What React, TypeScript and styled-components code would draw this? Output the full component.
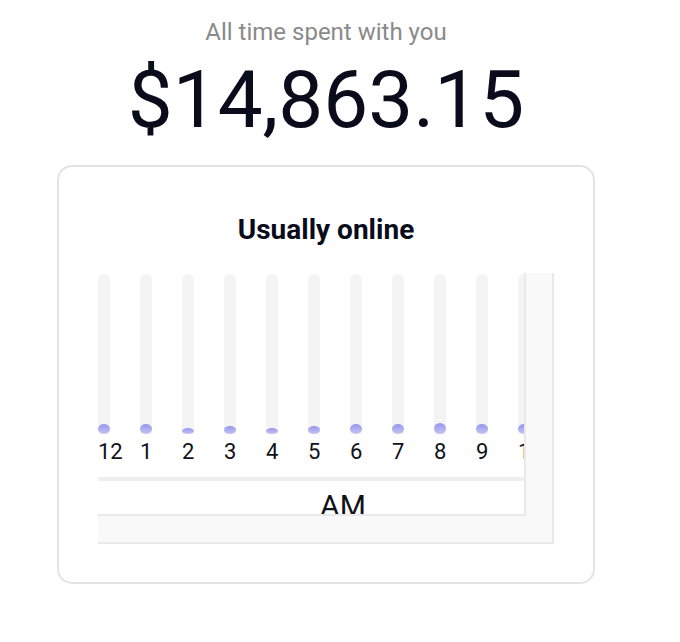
import React from "react";
import styled, { createGlobalStyle } from "styled-components";

const GlobalStyle = createGlobalStyle`
  html, body {
    margin: 0;
    padding: 0;
    background: #ffffff;
    font-family: Roboto, "Noto Sans", "Liberation Sans", sans-serif;
  }
  * { box-sizing: border-box; }
`;

const Page = styled.div`
  width: 538px;
  margin-left: 57px;
  padding-top: 18px;
  display: flex;
  flex-direction: column;
  align-items: stretch;
`;

const Subtitle = styled.div`
  font-size: 24px;
  line-height: 28px;
  color: #8a8a8a;
  text-align: center;
`;

const Amount = styled.div`
  margin-top: 7px;
  font-size: 80px;
  line-height: 94px;
  color: #0a0b1b;
  text-align: center;
`;

const Card = styled.section`
  margin-top: 18px;
  border: 2px solid #e3e3e3;
  border-radius: 15px;
  padding: 46px 39px 38px 39px;
  display: flex;
  flex-direction: column;
`;

const CardTitle = styled.h2`
  margin: 0;
  font-size: 28px;
  line-height: 33px;
  font-weight: 700;
  color: #0a0b1b;
  text-align: center;
`;

const ScrollFrame = styled.div`
  margin-top: 27px;
  background: #f9f9f9;
  padding: 0 26px 26px 0;
  border-right: 2px solid #e9e9e9;
  border-bottom: 2px solid #e9e9e9;
`;

const Viewport = styled.div`
  height: 243px;
  overflow: hidden;
  background: #ffffff;
  border-right: 2px solid #e9e9e9;
  border-bottom: 2px solid #e9e9e9;
  padding-top: 1px;
`;

const Strip = styled.div`
  display: flex;
  width: max-content;
`;

const Period = styled.div`
  display: flex;
  flex-direction: column;
  width: 490px;
  margin-right: 16px;
`;

const Hours = styled.div`
  display: flex;
  gap: 30px;
`;

const Hour = styled.div`
  width: 12px;
  display: flex;
  flex-direction: column;
  align-items: flex-start;
`;

const Track = styled.div`
  width: 12px;
  height: 160px;
  border-radius: 6px 6px 0 0;
  background: #f4f4f4;
  display: flex;
  flex-direction: column;
  justify-content: flex-end;
`;

const Fill = styled.div<{ $h: number }>`
  width: 12px;
  height: ${(p) => p.$h}px;
  border-radius: 50%;
  background: linear-gradient(180deg, #9797ec 0%, #c3c3f5 100%);
`;

const HourLabel = styled.div`
  margin-top: 5px;
  font-size: 22px;
  line-height: 26px;
  color: #111118;
  white-space: nowrap;
`;

const Divider = styled.div`
  margin-top: 12px;
  height: 4px;
  background: #eeeeee;
`;

const PeriodLabel = styled.div`
  margin-top: 7px;
  font-size: 30px;
  line-height: 35px;
  color: #111118;
  text-align: center;
`;

const hours = ["12", "1", "2", "3", "4", "5", "6", "7", "8", "9", "10", "11"];
const am = [10, 10, 6, 8, 6, 8, 10, 10, 11, 10, 10, 9];
const pm = [9, 10, 11, 10, 9, 8, 10, 11, 10, 9, 10, 10];

const periods = [
  { name: "AM", values: am },
  { name: "PM", values: pm },
];

export default function App() {
  return (
    <>
      <GlobalStyle />
      <Page>
        <Subtitle>All time spent with you</Subtitle>
        <Amount>$14,863.15</Amount>
        <Card>
          <CardTitle>Usually online</CardTitle>
          <ScrollFrame>
            <Viewport>
              <Strip>
                {periods.map((p) => (
                  <Period key={p.name}>
                    <Hours>
                      {hours.map((h, i) => (
                        <Hour key={h}>
                          <Track>
                            <Fill $h={p.values[i]} />
                          </Track>
                          <HourLabel>{h}</HourLabel>
                        </Hour>
                      ))}
                    </Hours>
                    <Divider />
                    <PeriodLabel>{p.name}</PeriodLabel>
                  </Period>
                ))}
              </Strip>
            </Viewport>
          </ScrollFrame>
        </Card>
      </Page>
    </>
  );
}
